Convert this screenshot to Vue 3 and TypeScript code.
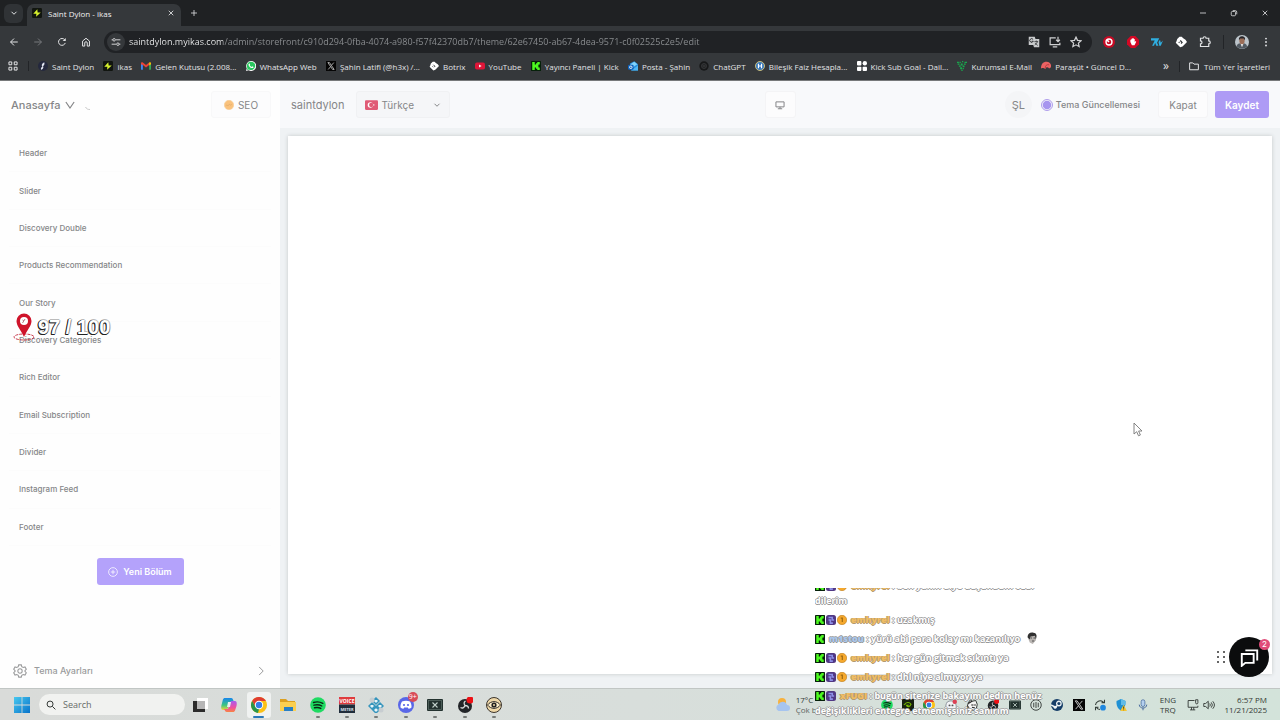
<script setup lang="ts">
import { ref } from 'vue'

interface Bookmark { icon: string; label: string }
interface Message { badges: string[]; user?: string; tone?: string; text: string; emote?: boolean }

const icons: Record<string, string> = {
  chevron: '<path d="M4 6l4 4 4-4" class="ln"/>',
  close: '<path d="M3.5 3.5l9 9M12.500 3.500l-9 9" class="ln"/>',
  plus: '<path d="M8 2v12M2 8h12" class="ln"/>',
  minimize: '<path d="M2 8h12" class="ln"/>',
  restore: '<rect x="2.500" y="5" width="8.500" height="8.500" rx="2" class="ln"/><path d="M5.500 3.200h5a3 3 0 0 1 3 3v4.500" class="ln"/>',
  back: '<path d="M14 8H2.500M8 2.500L2.500 8 8 13.500" class="ln"/>',
  forward: '<path d="M2 8h11.500M8 2.500L13.500 8 8 13.500" class="ln"/>',
  reload: '<path d="M13.200 9.500A5.500 5.500 0 1 1 12.300 4.500" class="ln"/><path d="M14 1.500v5H9z" fill="currentColor"/>',
  home: '<path d="M2.500 6.500L8 2l5.500 4.500v8H10V9.500a2 2 0 0 0-4 0v5H2.500z" class="ln"/>',
  tune: '<path d="M1 4.500h2M8 4.500h7M1 11.500h7M13 11.500h2" class="ln"/><circle cx="5" cy="4.500" r="2" class="ln"/><circle cx="11" cy="11.500" r="2" class="ln"/>',
  translate: '<path d="M1 1h8l1 3h5v11H8l-1-3H1z" fill="#c9cbcd"/><path d="M6.800 4.600A2.400 2.400 0 1 0 7 7H5" fill="none" stroke="#292b2e" stroke-width="1.300"/><path d="M8.500 7.500h5M11 6v1.500M12.500 7.500c-.5 2-2 3.500-3.500 4.500M9.500 9.500c1 1.500 2.500 2.500 3.500 3" fill="none" stroke="#292b2e"/>',
  install: '<path d="M9 2.500H1.500v9h13V9M5 14.500h6" class="ln"/><path d="M12 1v6M9.500 5L12 7.500 14.500 5" class="ln"/>',
  star: '<path d="M8 1.500l2 4.300 4.700.5-3.500 3.200 1 4.700L8 11.800l-4.200 2.400 1-4.700L1.300 6.300 6 5.800z" class="ln"/>',
  redEye: '<circle cx="8" cy="8" r="8" fill="#c80a24"/><circle cx="8" cy="8" r="4" fill="none" stroke="#fff" stroke-width="1.800"/><path d="M8 8L5.500 5.500" stroke="#fff" stroke-width="2"/>',
  block: '<path d="M5 0h6l5 5v6l-5 5H5l-5-5V5z" fill="#d30824"/><path d="M4.500 8V5h1.300v2V3.500h1.500V7 2.800h1.500V7 4h1.500v4l1-1.200 1 .8-2.300 4.600H6.500z" fill="#fff"/>',
  seven: '<path d="M0 3h8L4 13H1.500L5 6H0zM8 3h3l-3 6 2 4H7L5.500 9zM10 8l2-3 1 4 3-3-3 7h-2z" fill="#2faee0"/>',
  diamond: '<path d="M3 4l3-3h3l2 2 3 2 2 3-6 6-3 1-6-6 1-2z" fill="#fff"/><path d="M7 6l2 2M10 8l-2 2M5 8l1 1" stroke="#34373a" stroke-width="1.500"/>',
  puzzle: '<path d="M2 3h3.500a2 2 0 0 1 4 0H13v3.500a2 2 0 0 1 0 4V14H2v-3.500a2 2 0 0 0 0-4z" class="ln"/>',
  avatar: '<circle cx="8" cy="8" r="8" fill="#bcc4ca"/><path d="M2 13c0-3 3-4 6-4s5 1 6 4a8 8 0 0 1-12 0z" fill="#525a62"/><path d="M6 9h4l-2 5z" fill="#eef0f1"/><ellipse cx="8" cy="6.500" rx="3" ry="4" fill="#9b6d57"/><path d="M4.500 6C4 2.500 6 1.200 8.500 1.500S12 3.500 11.300 6L10 4H6z" fill="#272529"/>',
  more: '<circle cx="8" cy="2.500" r="1.500" fill="currentColor"/><circle cx="8" cy="8" r="1.500" fill="currentColor"/><circle cx="8" cy="13.500" r="1.500" fill="currentColor"/>',
  apps: '<path d="M1.500 1.500h4.500v4.500H1.500zM10 1.500h4.500v4.500H10zM1.500 10h4.500v4.500H1.500zM10 10h4.500v4.500H10z" class="ln"/>',
  feather: '<circle cx="8" cy="8" r="8" fill="#24283e"/><path d="M10 2c-4 2-5 5-3 7-2 1-3 3-2 5 4-1 4-4 3-6 2-1 3-3 2-6z" fill="#dfe3ef"/>',
  bolt: '<rect width="16" height="16" rx="2" fill="#111510"/><path d="M8.500 2L2 9h5l-.5 5L14 7H9z" fill="#d9f32e"/>',
  gmail: '<path d="M0 3h3v11H1c-.6 0-1-.4-1-1z" fill="#4285f4"/><path d="M13 3h3v10c0 .6-.4 1-1 1h-2z" fill="#34a853"/><path d="M0 3.500C0 2 2 1.500 3 2.500l5 4 5-4v4l-5 4-5-4L0 5z" fill="#ea4335"/><path d="M13 2.500c1-1 3-.5 3 1V5l-3 2z" fill="#fbbc04"/>',
  whatsapp: '<path d="M0 16l1.200-4.300A8 8 0 1 1 4.300 14.900z" fill="#fff"/><path d="M1.500 14.500l.9-3.100A6.700 6.700 0 1 1 4.700 13.600z" fill="#29c75f"/><path d="M5 4c.8-.5 1.300.8 1.600 1.700L6 6.700c.6 1.300 1.700 2.200 3 2.700l1-1 2 1c0 1.500-1.500 2.200-2.700 1.900C6.500 10.500 4 8 4 5.800 4 5 4.500 4.200 5 4z" fill="#fff"/>',
  xlogo: '<rect width="16" height="16" fill="#050505"/><path d="M3 2.500h2.500l7.500 11h-2.500zM12.500 2.500L9 6.500M3.500 13.500l3.700-4.300" fill="none" stroke="#e8e8e8" stroke-width="1.100"/>',
  youtube: '<rect y="2.500" width="16" height="11" rx="3" fill="#df1538"/><path d="M6.500 5.500v5l4-2.500z" fill="#fff"/>',
  kick: '<rect width="16" height="16" rx="1" fill="#06210a"/><path d="M2 1.500h4v4h2v-2h2v-2h4v4h-2v2h-1v1h1v2h2v4h-4v-2H8v-2H6v4H2z" fill="#4dfa20"/>',
  outlook: '<path d="M3 4l7-3.500L16 5v10H5z" fill="#238bdc"/><path d="M4 5l6-4 5 4-7 5z" fill="#80d3fb"/><path d="M5 15l11-8v8z" fill="#50b7f4"/><rect y="6" width="9" height="8" rx="2" fill="#0d62bd"/><circle cx="4.500" cy="10" r="2" fill="none" stroke="#fff" stroke-width="1.400"/>',
  chatgpt: '<circle cx="8" cy="8" r="7.500" fill="#171819"/><circle cx="8" cy="8" r="4" fill="none" stroke="#454749"/><path d="M8 4v8M4.500 6l7 4M11.500 6l-7 4" stroke="#3b3d3f"/>',
  hbadge: '<circle cx="8" cy="8" r="7.200" fill="#3979bd" stroke="#dfcc7b" stroke-width="1.400"/><path d="M5.500 4.500v7M10.500 4.500v7M5.500 8h5" stroke="#fff" stroke-width="1.800"/>',
  tiles: '<rect width="7" height="7" rx="1.500" fill="#fff"/><circle cx="12.500" cy="3.500" r="3.500" fill="#fff"/><rect y="9" width="7" height="7" rx="1.500" fill="#fff"/><rect x="9" y="9" width="7" height="7" rx="1.500" fill="#fff"/>',
  dots: '<g fill="#18a94d"><path d="M0 1h3v2H0zM4 1h2v2H4zM8 0h2v2H8zM12 1h4v2h-4zM1 4h3v2H1zM6 4h3v3H6zM11 4h3v2h-3zM3 7h3v2H3zM9 7h3v3H9zM5 10h3v3H5zM9 11h2v2H9zM7 14h2v2H7z"/></g>',
  parasut: '<path d="M0 12C0 5 3 1 9 1c5 0 8 4 7 9l-3 2c-2-3-5-3-6 1-2-2-4-2-7-1z" fill="#eb6263"/><path d="M7 12C6 8 9 5 13 6" fill="none" stroke="#b9373d" stroke-width="1.500"/>',
  folder: '<path d="M1 3h5l2 2h7v9H1z" class="ln"/>',
  orange: '<circle cx="8" cy="8" r="7.500" fill="#fac27d" stroke="#f7ce98"/><path d="M3.500 9c2-4 2 3 4-1s1 3 5-1" fill="none" stroke="#e0ad6c" stroke-width="1.300"/>',
  purple: '<circle cx="8" cy="8" r="7.300" fill="none" stroke="#a48fe8" stroke-width="1.200"/><circle cx="8" cy="8" r="5.700" fill="#a795ef"/>',
  monitor: '<path d="M1.500 3h13v8h-13zM8 11v3M4.500 14h7" class="ln"/>',
  gear: '<path d="M6.500 1h3l.5 2 1.700 1 2-.6 1.500 2.600L13.700 7.500v1L15.200 10l-1.500 2.600-2-.6-1.700 1-.5 2h-3L6 13l-1.700-1-2 .6L.8 10l1.500-1.500v-1L.8 6l1.500-2.600 2 .6L6 3z" class="thin"/><circle cx="8" cy="8" r="2.500" class="thin"/>',
  right: '<path d="M5 1.500L11.500 8 5 14.500" class="ln"/>',
  addCircle: '<circle cx="8" cy="8" r="7" class="thin"/><path d="M8 4.500v7M4.500 8h7" class="thin"/>',
  windows: '<defs><linearGradient id="wg" x2="1" y2="1"><stop stop-color="#48c8ef"/><stop offset="1" stop-color="#0873ca"/></linearGradient></defs><path d="M0 0h7.600v7.600H0zM8.400 0H16v7.600H8.400zM0 8.400h7.600V16H0zM8.400 8.400H16V16H8.400z" fill="url(#wg)"/>',
  search: '<circle cx="6.500" cy="6.500" r="4.800" class="ln"/><path d="M10.200 10.200L15 15" class="ln"/>',
  taskview: '<path d="M5 1h11v11H5z" fill="#fff"/><path d="M1 4h12v11H1z" fill="#2b2b2b"/><path d="M5 4h8v8H5z" fill="#b6b6b6"/>',
  copilot: '<defs><linearGradient id="ca" x2="0" y2="1"><stop stop-color="#1685ed"/><stop offset=".6" stop-color="#3cc780"/><stop offset="1" stop-color="#f4d33c"/></linearGradient><linearGradient id="cb" x2="0" y2="1"><stop stop-color="#a85af0"/><stop offset=".6" stop-color="#f0509d"/><stop offset="1" stop-color="#f88542"/></linearGradient></defs><path d="M4 1h6c2 0 2 2 3 4H9L7 11c-.5 1.500-1 2-2 2H2C0 13 0 10 .5 8l1.300-5C2.200 1.600 3 1 4 1z" fill="url(#ca)"/><path d="M12 15H6c-2 0-2-2-3-3h4L9 6c.5-1.500 1-2 2-2h3c2 0 2 3 1.500 5l-1.300 4c-.4 1.400-1.200 2-2.200 2z" fill="url(#cb)"/><path d="M7 5h3L9 10H6z" fill="#e8edf0"/>',
  chrome: '<circle cx="8" cy="8" r="8" fill="#fbc116"/><path d="M1.100 4A8 8 0 0 1 15 4H8L4.500 10z" fill="#df3e32"/><path d="M1.100 4l3.500 6L8 12l-1 4A8 8 0 0 1 1.100 4z" fill="#28954b"/><circle cx="8" cy="8" r="4.200" fill="#fff"/><circle cx="8" cy="8" r="3.200" fill="#367de6"/>',
  explorer: '<path d="M0 2h6l2 2h7v4H0z" fill="#dca020"/><path d="M0 5h16v9H0z" fill="#fbcf50"/><path d="M4 10h9v4H4z" fill="#287fc5"/>',
  spotify: '<circle cx="8" cy="8" r="7.800" fill="#1edb62"/><path d="M3.500 5.500c3-1 6.500-.7 9.300.8M4 8.200c2.700-.8 5.500-.5 7.800.8M4.500 10.800c2.300-.6 4.500-.4 6.300.6" fill="none" stroke="#092713" stroke-width="1.400" stroke-linecap="round"/>',
  voice: '<rect width="16" height="7.500" fill="#df3c3e"/><rect y="7.500" width="16" height="8.500" fill="#202d3b"/><text x="8" y="5.800" font-size="5" font-weight="700" text-anchor="middle" fill="#fff">VOICE</text><text x="8" y="13.500" font-size="4" font-weight="700" text-anchor="middle" fill="#dce2e8">METER</text>',
  lamp: '<g fill="#e8f4f8" stroke="#3695bd" stroke-width="1.500"><path d="M8 1l3 3-3 3-3-3zM4 6l3 3-3 3-3-3zM12 6l3 3-3 3-3-3zM8 10l3 3-3 3-3-3z"/></g><circle cx="4" cy="3" r="2.500" fill="#c7cdd1"/><circle cx="13" cy="13" r="2.500" fill="#c7cdd1"/>',
  discord: '<circle cx="8" cy="8" r="8" fill="#5967e8"/><path d="M4 4.500c2.500-1 5.500-1 8 0 1.200 2 1.700 4 1.500 6-1 .8-2 1.200-3 1.300l-.7-1.200H6.200l-.7 1.200c-1-.1-2-.5-3-1.300-.2-2 .3-4 1.500-6z" fill="#fff"/><circle cx="6" cy="8" r="1.100" fill="#5967e8"/><circle cx="10" cy="8" r="1.100" fill="#5967e8"/>',
  terminal: '<rect y="2" width="16" height="12" rx="1" fill="#23322f"/><rect x="1.500" y="3.500" width="13" height="9" fill="none" stroke="#5f706a" stroke-width=".7"/><path d="M5.500 5.500l5 5M10.500 5.500l-5 5" stroke="#c1d0ca" stroke-width="1.100"/>',
  obs: '<circle cx="8" cy="9" r="7" fill="#222528"/><path d="M8 8.500c-1.500-2-1-3.500.5-4.500M8 8.500c2.500 0 3.500 1.500 3.500 3M8 8.500c-1 2.500-2.500 3-4.500 2" fill="none" stroke="#d7d9da" stroke-width="1.300"/><circle cx="13" cy="3" r="3.500" fill="#ed1116"/>',
  eye: '<circle cx="8" cy="8" r="7.500" fill="#efd8a8" stroke="#3c352d"/><path d="M1.500 8C5 3.500 11 3.500 14.500 8 11 12.500 5 12.500 1.500 8z" fill="#f8eac8" stroke="#302d2b"/><circle cx="8" cy="8" r="2.600" fill="#222"/><circle cx="8" cy="8" r="1" fill="#efd8a8"/>',
  weather: '<circle cx="7" cy="5" r="4" fill="#f7b23e"/><path d="M3.500 14a3.500 3.500 0 0 1 0-6.500A4.500 4.500 0 0 1 12 8a3 3 0 0 1 0 6z" fill="#a6c4ef"/>',
  nvidia: '<rect width="16" height="16" fill="#162010"/><path d="M2.500 8C6 3.500 10 4 12 7c-2 4-5 4-6 1.500 1 .6 2 0 2.500-1" fill="none" stroke="#77b900" stroke-width="1.500"/>',
  trayDiscord: '<path d="M3 4c3-2 7-2 10 0 2 3 2 5 2 8-2 2-4 2-5 1H6c-2 1-4 0-5-1 0-3 0-5 2-8z" fill="#f2f3f6" stroke="#757c85"/><circle cx="6" cy="8.500" r="1.300" fill="#555"/><circle cx="10" cy="8.500" r="1.300" fill="#555"/><circle cx="13" cy="3.500" r="3" fill="#dc4054"/>',
  horse: '<path d="M1 13l2-8 3-4 2 2 5-1 2 5-1 5-4 3-5-1-2-4z" fill="#f5f5f3" stroke="#313632" stroke-width="1.300"/><path d="M3 6l5-3M7 8h3M12 7v2M8 11l4 1" stroke="#222" stroke-width="1.500"/>',
  bars: '<circle cx="8" cy="8" r="7" fill="none" stroke="#3e4441" stroke-width="1.300"/><path d="M5 5v6M8 4v8M11 5v6" stroke="#3e4441" stroke-width="1.300"/>',
  steam: '<circle cx="8" cy="8" r="8" fill="#163e68"/><circle cx="10.500" cy="6" r="3" fill="none" stroke="#eef4f6" stroke-width="1.700"/><path d="M0 8l6 3 3-3" fill="none" stroke="#eef4f6" stroke-width="2"/><circle cx="5.500" cy="11" r="2" fill="#eef4f6"/>',
  sync: '<path d="M2 8a6 6 0 0 1 10-4l2 1M14 1v4h-4M8 14a6 6 0 0 1-5-3M2 15v-4h4" fill="none" stroke="#333c38" stroke-width="1.400"/><circle cx="12" cy="11.500" r="3.800" fill="#1f87df"/>',
  shield: '<path d="M8 0l6 2.500C14.500 9 12 13 8 15.500 4 13 1.500 9 2 2.500z" fill="#2091d4"/><path d="M8 0l6 2.500V8H8z" fill="#60bbe8"/><path d="M11.500 7.500L16 16H7z" fill="#f7c735"/><path d="M11.500 10v3M11.500 14v1" stroke="#39320c" stroke-width="1.100"/>',
  mic: '<rect x="5.500" y="1" width="5" height="9" rx="2.500" fill="#b4d0ef" stroke="#45699c"/><path d="M3 7.500c0 6 10 6 10 0M8 12v3" fill="none" stroke="#45699c" stroke-width="1.300"/>',
  network: '<path d="M10 2H1.500v9h13V9M4 14.500h7M6 11v3.500M9 11v3.500" class="thin"/><path d="M11.500 1v4a1.500 1.500 0 0 0 3 0V1z" class="thin"/>',
  speaker: '<path d="M1 6h2.500L7 3v10l-3.500-3H1zM9 6q1.500 2 0 4M11 4.500q3 3.500 0 7M13 3q4.500 5 0 10" class="thin"/>',
  badge: '<rect width="16" height="16" rx="4" fill="#513884"/><path d="M4 4h6v4h3M4 8h3v5h4" fill="none" stroke="#8d8fe8" stroke-width="2.500"/>',
  coin: '<circle cx="8" cy="8" r="7.500" fill="#f5a82d" stroke="#bd7d1b"/><path d="M6 5h2.500v6" fill="none" stroke="#a06c14" stroke-width="2"/>',
  chat: '<path d="M1.500 5h10v7.500H4.500L1.500 15z" class="ln"/><path d="M4.500 2h10v8.500" class="ln"/>'
}

const bookmarks: Bookmark[] = [
  { icon: 'feather', label: 'Saint Dylon' },
  { icon: 'bolt', label: 'ikas' },
  { icon: 'gmail', label: 'Gelen Kutusu (2.008...' },
  { icon: 'whatsapp', label: 'WhatsApp Web' },
  { icon: 'xlogo', label: 'Şahin Latifi (@h3x) /...' },
  { icon: 'diamond', label: 'Botrix' },
  { icon: 'youtube', label: 'YouTube' },
  { icon: 'kick', label: 'Yayıncı Paneli | Kick' },
  { icon: 'outlook', label: 'Posta - Şahin' },
  { icon: 'chatgpt', label: 'ChatGPT' },
  { icon: 'hbadge', label: 'Bileşik Faiz Hesapla...' },
  { icon: 'tiles', label: 'Kick Sub Goal - Dail...' },
  { icon: 'dots', label: 'Kurumsal E-Mail' },
  { icon: 'parasut', label: 'Paraşüt • Güncel D...' }
]

const sections = ['Header', 'Slider', 'Discovery Double', 'Products Recommendation', 'Our Story', 'Discovery Categories', 'Rich Editor', 'Email Subscription', 'Divider', 'Instagram Feed', 'Footer']
const extensions = ['redEye', 'block', 'seven', 'diamond', 'puzzle']
const taskApps = ['taskview', 'copilot', 'chrome', 'explorer', 'spotify', 'voice', 'lamp', 'discord', 'terminal', 'obs', 'eye']
const running = ['spotify', 'voice', 'lamp', 'discord', 'terminal', 'obs', 'eye']
const tray = ['spotify', 'nvidia', 'chrome', 'trayDiscord', 'horse', 'obs', 'terminal', 'bars', 'steam', 'xlogo', 'sync', 'shield', 'mic']

const messages: Message[] = [
  { badges: ['kick', 'badge', 'coin'], user: 'emhyrel', tone: 'gold', text: 'ben yakın diye düşündüm özür dilerim' },
  { badges: ['kick', 'badge', 'coin'], user: 'emhyrel', tone: 'gold', text: 'uzakmış' },
  { badges: ['kick'], user: 'm1stou', tone: 'blue', text: 'yürü abi para kolay mı kazanılıyo', emote: true },
  { badges: ['kick', 'badge', 'coin'], user: 'emhyrel', tone: 'gold', text: 'her gün gitmek sıkıntı ya' },
  { badges: ['kick', 'badge', 'coin'], user: 'emhyrel', tone: 'gold', text: 'dhl niye almıyor ya' },
  { badges: ['kick', 'badge'], user: 'xFUGI', tone: 'gold', text: 'bugün sitenize bakayım dedim henüz değişiklikleri entegre etmemişsiniz sanırım' }
]

const address = ref('saintdylon.myikas.com/admin/storefront/c910d294-0fba-4074-a980-f57f42370db7/theme/62e67450-ab67-4dea-9571-c0f02525c2e5/edit')
const language = ref('tr')
const query = ref('')
</script>

<template>
  <div class="desktop">
    <header class="browser">
      <div class="tabs">
        <button class="tab-list" aria-label="Sekmeler"><svg class="i10" viewBox="0 0 16 16" v-html="icons.chevron" /></button>
        <div class="tab">
          <svg class="i10" viewBox="0 0 16 16" v-html="icons.bolt" />
          <span class="tab-title">Saint Dylon - ikas</span>
          <button aria-label="Kapat"><svg class="i8" viewBox="0 0 16 16" v-html="icons.close" /></button>
        </div>
        <button class="new-tab" aria-label="Yeni sekme"><svg class="i8" viewBox="0 0 16 16" v-html="icons.plus" /></button>
        <div class="window-buttons">
          <button v-for="n in ['minimize', 'restore', 'close']" :key="n" :aria-label="n"><svg class="i8" viewBox="0 0 16 16" v-html="icons[n]" /></button>
        </div>
      </div>
      <div class="toolbar">
        <div class="nav">
          <button v-for="n in ['back', 'forward', 'reload', 'home']" :key="n" :class="n" :aria-label="n"><svg class="i10" viewBox="0 0 16 16" v-html="icons[n]" /></button>
        </div>
        <div class="omnibox">
          <button class="site-info" aria-label="Site bilgileri"><svg class="i10" viewBox="0 0 16 16" v-html="icons.tune" /></button>
          <input v-model="address" class="address" aria-label="Adres" spellcheck="false" />
          <button v-for="n in ['translate', 'install', 'star']" :key="n" :aria-label="n"><svg class="i12" viewBox="0 0 16 16" v-html="icons[n]" /></button>
        </div>
        <div class="extensions">
          <button v-for="n in extensions" :key="n" :aria-label="n"><svg class="i12" viewBox="0 0 16 16" v-html="icons[n]" /></button>
        </div>
        <div class="profile">
          <button aria-label="Profil"><svg class="i14" viewBox="0 0 16 16" v-html="icons.avatar" /></button>
          <button aria-label="Menü"><svg class="i10" viewBox="0 0 16 16" v-html="icons.more" /></button>
        </div>
      </div>
      <nav class="bookmarks">
        <button class="apps" aria-label="Uygulamalar"><svg class="i10" viewBox="0 0 16 16" v-html="icons.apps" /></button>
        <div class="bookmark-list">
          <a v-for="b in bookmarks" :key="b.label" href="#"><svg class="i10" viewBox="0 0 16 16" v-html="icons[b.icon]" /><span>{{ b.label }}</span></a>
        </div>
        <button class="overflow">»</button>
        <a class="all" href="#"><svg class="i10" viewBox="0 0 16 16" v-html="icons.folder" /><span>Tüm Yer İşaretleri</span></a>
      </nav>
    </header>

    <div class="editor">
      <aside class="sidebar">
        <div class="side-head">
          <button class="page-menu">Anasayfa <svg class="i12" viewBox="0 0 16 16"><path d="M2.500 4L8 12l5.500-8" class="ln" /></svg></button>
          <svg class="spinner" viewBox="0 0 16 16"><path d="M3 8c2 4 5 5 9 5" class="ln" /></svg>
          <button class="outline seo"><svg class="i10" viewBox="0 0 16 16" v-html="icons.orange" />SEO</button>
        </div>
        <ul class="sections">
          <li v-for="s in sections" :key="s"><button>{{ s }}</button></li>
        </ul>
        <div class="add-row"><button class="primary add"><svg class="i10" viewBox="0 0 16 16" v-html="icons.addCircle" />Yeni Bölüm</button></div>
        <button class="theme-settings"><svg class="i14" viewBox="0 0 16 16" v-html="icons.gear" /><span>Tema Ayarları</span><svg class="i10" viewBox="0 0 16 16" v-html="icons.right" /></button>
      </aside>
      <main class="workspace">
        <div class="main-head">
          <div class="head-left">
            <span class="store">saintdylon</span>
            <label class="language">
              <svg class="flag" viewBox="0 0 24 18"><rect width="24" height="18" rx="2" fill="#e05b76" /><circle cx="10" cy="9" r="5" fill="#fff" /><circle cx="11.500" cy="9" r="4" fill="#e05b76" /><path d="M14 9l4-1.500-2.500 3.500v-4L18 10.500z" fill="#fff" /></svg>
              <select v-model="language" aria-label="Dil"><option value="tr">Türkçe</option></select>
              <svg class="i10" viewBox="0 0 16 16" v-html="icons.chevron" />
            </label>
          </div>
          <button class="outline device" aria-label="Masaüstü"><svg class="i10" viewBox="0 0 16 16" v-html="icons.monitor" /></button>
          <div class="head-right">
            <span class="initials">ŞL</span>
            <button class="update"><svg class="i12" viewBox="0 0 16 16" v-html="icons.purple" />Tema Güncellemesi</button>
            <button class="outline dismiss">Kapat</button>
            <button class="primary save">Kaydet</button>
          </div>
        </div>
        <div class="canvas-wrap"><div class="canvas"></div></div>
      </main>
    </div>

    <footer class="taskbar">
      <button class="start" aria-label="Başlat"><svg class="i16" viewBox="0 0 16 16" v-html="icons.windows" /></button>
      <label class="search"><svg class="i10" viewBox="0 0 16 16" v-html="icons.search" /><input v-model="query" placeholder="Search" aria-label="Search" /></label>
      <div class="task-apps">
        <button v-for="n in taskApps" :key="n" :class="{ active: n === 'chrome', running: running.includes(n) }" :aria-label="n">
          <svg class="i16" viewBox="0 0 16 16" v-html="icons[n]" /><span v-if="n === 'discord'" class="count">9+</span>
        </button>
      </div>
      <div class="weather"><svg class="i16" viewBox="0 0 16 16" v-html="icons.weather" /><div>17°C<br /><span>Çok bulutlu</span></div></div>
      <div class="tray"><svg v-for="n in tray" :key="n" class="i12" viewBox="0 0 16 16" v-html="icons[n]" /></div>
      <div class="input-lang">ENG<br />TRQ</div>
      <div class="status"><svg class="i12" viewBox="0 0 16 16" v-html="icons.network" /><svg class="i12" viewBox="0 0 16 16" v-html="icons.speaker" /></div>
      <div class="clock">6:57 PM<br />11/21/2025</div>
    </footer>

    <div class="goal">
      <svg viewBox="0 0 22 28"><ellipse cx="11" cy="24" rx="10" ry="3" fill="none" stroke="#c83b4d" stroke-dasharray="3 1" /><path d="M11 24C8 17 3.500 13 3.500 8a7.500 7.500 0 0 1 15 0c0 5-4.500 9-7.500 16z" fill="#cf142b" /><circle cx="11" cy="8" r="4" fill="#fff" /><path d="M9.500 10l2.500-4M9.500 7l1.500 1" stroke="#bb7783" /></svg>
      <span>97 / 100</span>
    </div>

    <div class="stream-chat">
      <div class="messages">
        <p v-for="(m, k) in messages" :key="k"><svg v-for="b in m.badges" :key="b" class="i10" viewBox="0 0 16 16" v-html="icons[b]" /><b :class="m.tone">{{ m.user }}</b> : {{ m.text }}<svg v-if="m.emote" class="emote" viewBox="0 0 16 16"><path d="M3 3c3-3 10-2 11 2l-1 6-4 5-4-2-2-5z" fill="#b9b5b2" /><path d="M2 7C2 2 6 0 10 1c4 0 5 4 3 9l-1-5-6 1-1 4z" fill="#303030" /><path d="M6 8h2M10 8h2M8 12h3" stroke="#333" /></svg></p>
      </div>
    </div>

    <div class="support">
      <svg class="grip" viewBox="0 0 8 12"><circle v-for="n in 6" :key="n" :cx="n % 2 ? 1 : 7" :cy="1 + Math.floor((n - 1) / 2) * 5" r="1" fill="#333" /></svg>
      <button aria-label="Sohbet"><svg viewBox="0 0 16 16" v-html="icons.chat" /><span>2</span></button>
    </div>
    <svg class="pointer" viewBox="0 0 10 15"><path d="M1 1v11l2.700-2.300 1.800 4.100 1.900-.8-1.800-4H9z" fill="#fff" stroke="#777" stroke-width=".9" /></svg>
  </div>
</template>

<style>
body { margin: 0; }
</style>

<style scoped>
.desktop { position: relative; display: flex; flex-direction: column; min-height: 100vh; overflow: hidden; background: #fff; font-family: "Inter", "Liberation Sans", sans-serif; color: #858688; }
button, input, select { margin: 0; padding: 0; border: 0; background: none; font: inherit; color: inherit; outline: 0; }
button { display: flex; align-items: center; justify-content: center; }
a { color: inherit; text-decoration: none; }
svg { display: block; flex: none; }
.desktop :deep(.ln) { fill: none; stroke: currentColor; stroke-width: 1.6; }
.desktop :deep(.thin) { fill: none; stroke: currentColor; stroke-width: 1.2; }
.i8 { width: 8px; height: 8px; }
.i10 { width: 10px; height: 10px; }
.i12 { width: 12px; height: 12px; }
.i14 { width: 14px; height: 14px; }
.i16 { width: 16px; height: 16px; }

.browser { background: #35383b; color: #e2e3e5; font-family: "Open Sans", "Noto Sans", sans-serif; font-size: 8px; }
.tabs { display: flex; align-items: center; height: 26px; padding-left: 4px; border-bottom: 1px solid #35383b; background: #1f2123; }
.tab-list { width: 19px; height: 19px; border-radius: 6px; background: #303336; }
.tab { display: flex; align-items: center; align-self: stretch; gap: 6px; box-sizing: border-box; width: 154px; margin-top: 4px; margin-left: 4px; padding: 0 6px 4px 5px; border-radius: 7px 7px 0 0; background: #35383b; color: #f0f0f1; }
.tab-title { flex: 1; }
.new-tab { margin-left: 9px; }
.window-buttons { display: flex; gap: 23px; margin-left: auto; padding-right: 11px; }
.toolbar { display: flex; align-items: center; height: 29px; padding: 0 9px; }
.nav { display: flex; gap: 14px; }
.forward { color: #77797c; }
.omnibox { display: flex; flex: 1; align-items: center; gap: 9px; height: 22px; margin-left: 13px; padding: 0 10px 0 3px; border-radius: 11px; background: #202225; color: #d0d1d3; }
.site-info { width: 18px; height: 18px; border-radius: 50%; background: #35383b; }
.address { flex: 1; min-width: 0; margin-left: -5px; font-size: 9px; color: transparent; background: linear-gradient(90deg, #f1f2f3 94px, #8d9093 94px); background-clip: text; }
.extensions { display: flex; gap: 12px; margin-left: 11px; }
.profile { display: flex; align-items: center; gap: 12px; margin-left: 12px; padding-left: 11px; border-left: 1px solid #222427; }
.bookmarks { display: flex; align-items: center; box-sizing: border-box; height: 25px; padding: 0 10px 4px 8px; border-bottom: 1px solid #77797a; white-space: nowrap; }
.apps { padding-right: 10px; border-right: 1px solid #222427; }
.bookmark-list { display: flex; flex: 1; justify-content: space-between; margin: 0 32px 0 9px; }
.bookmarks a { display: flex; align-items: center; gap: 4px; }
.overflow { margin-right: 10px; font-size: 12px; line-height: 12px; }
.bookmarks .all { gap: 5px; padding-left: 9px; border-left: 1px solid #222427; }

.editor { display: flex; flex: 1; }
.sidebar { display: flex; flex-direction: column; width: 280px; background: #fefefe; }
.side-head { display: flex; align-items: center; height: 47px; margin-bottom: 7px; padding: 0 9px 0 11px; }
.page-menu { gap: 4px; font-size: 11px; font-weight: 500; }
.spinner { width: 8px; height: 8px; margin-left: 8px; margin-top: 4px; color: #bbb; }
.outline { box-sizing: border-box; height: 27px; border: 1px solid #f4f4f6; border-radius: 3px; background: #fcfcfd; font-size: 10px; }
.seo { gap: 4px; width: 60px; margin-left: auto; border-color: #f8f8f9; }
.sections { display: grid; flex: 1; grid-auto-rows: 1fr; margin: 0 9px; padding: 0; list-style: none; font-size: 8px; font-weight: 500; }
.sections li { display: flex; border-bottom: 1px solid #fcfcfc; }
.sections button { flex: 1; justify-content: flex-start; padding-left: 10px; }
.add-row { display: flex; justify-content: center; height: 27px; margin: 12px 0 68px; }
.primary { height: 27px; border-radius: 3px; background: #ae9bf5; color: #fff; font-size: 10px; font-weight: 600; }
.add { gap: 5px; width: 87px; background: #b4a2fb; font-size: 9px; }
.theme-settings { height: 35px; padding: 0 14px 0 13px; color: #9a9b9c; font-size: 9px; font-weight: 500; }
.theme-settings span { flex: 1; padding-left: 7px; text-align: left; }
.workspace { display: flex; flex: 1; flex-direction: column; min-width: 0; background: #eff2f4; }
.main-head { display: grid; grid-template-columns: 1fr auto 1fr; align-items: center; height: 47px; padding: 0 11px; background: #f8f9fb; }
.head-left, .head-right { display: flex; align-items: center; }
.head-right { justify-content: flex-end; }
.store { font-size: 11px; font-weight: 400; }
.language { display: flex; align-items: center; box-sizing: border-box; width: 94px; height: 27px; margin-left: 12px; padding: 0 7px 0 8px; border: 1px solid #f0f1f3; border-radius: 3px; background: #f5f6f8; font-size: 10px; }
.flag { width: 13px; height: 10px; }
.language select { flex: 1; min-width: 0; margin-left: 3px; appearance: none; }
.device { width: 31px; }
.initials { display: grid; place-items: center; width: 27px; height: 27px; margin-right: 9px; border-radius: 50%; background: #f4f5f7; font-size: 11px; }
.update { gap: 3px; margin-right: 18px; font-size: 9px; font-weight: 500; }
.dismiss { width: 50px; margin-right: 7px; }
.save { width: 54px; }
.canvas-wrap { display: flex; flex: 1; padding: 8px 8px 14px; }
.canvas { flex: 1; background: #fff; box-shadow: 0 0 4px #c4c8ca; }

.taskbar { display: flex; align-items: center; box-sizing: border-box; height: 32px; border-top: 1px solid #c1c6c4; background: linear-gradient(90deg, #d9dbd9, #d8dedb 50%, #d3e3da); color: #333936; font-family: "Open Sans", "Noto Sans", sans-serif; font-size: 8px; line-height: 10px; }
.start { margin-left: 14px; }
.search { display: flex; align-items: center; gap: 7px; box-sizing: border-box; width: 146px; height: 21px; margin-left: 9px; padding-left: 7px; border-radius: 11px; background: #f1f2f0; font-size: 9px; }
.search input { min-width: 0; width: 100px; }
.search input::placeholder { color: #666b68; opacity: 1; }
.task-apps { display: flex; justify-content: space-between; width: 318px; margin-left: 3px; }
.task-apps button { position: relative; width: 24px; height: 26px; border-radius: 3px; }
.task-apps .active { background: #f0f2f1; }
.active::after, .running::after { content: ""; position: absolute; bottom: 0; width: 4px; height: 2px; border-radius: 1px; background: #777b79; }
.active::after { width: 11px; background: #2878b9; }
.count { position: absolute; top: 0; right: 0; width: 10px; height: 10px; border-radius: 50%; background: #d84b58; color: #fff; font-size: 7px; line-height: 10px; }
.weather { display: flex; align-items: center; gap: 5px; margin-left: auto; }
.weather div { width: 85px; }
.weather span { color: #5d6561; }
.tray { display: flex; justify-content: space-between; width: 268px; }
.input-lang { margin-left: 11px; text-align: center; }
.status { display: flex; gap: 4px; margin-left: 11px; }
.clock { width: 52px; margin-right: 13px; text-align: right; }

.goal { position: absolute; left: 13px; top: 313px; display: flex; align-items: center; gap: 3px; }
.goal svg { width: 22px; height: 28px; }
.goal span { color: #fff; font-family: "Liberation Sans", sans-serif; font-size: 20px; font-weight: 700; line-height: 28px; text-shadow: -1px 0 #222, 0 1px #222, -1px 1px #222, 1px 0 #bbb, 0 -1px #bbb; }
.stream-chat { position: absolute; top: 588px; bottom: 0; left: 815px; width: 240px; overflow: hidden; }
.messages { position: absolute; bottom: 2px; display: flex; flex-direction: column; gap: 4px; width: 240px; color: #fff; font-family: "Open Sans", "Noto Sans", sans-serif; font-size: 9px; font-weight: 700; line-height: 15px; text-shadow: 1px 0 #999, -1px 0 #999, 0 1px #999, 0 -1px #aaa; }
.messages p { margin: 0; }
.messages svg { display: inline-block; margin-right: 1px; vertical-align: -2px; }
.messages b { margin-left: 3px; }
.messages .gold { color: #f0bd62; text-shadow: 1px 0 #b39a72, -1px 0 #b39a72, 0 1px #b39a72; }
.messages .blue { color: #a9c7ed; }
.messages .emote { width: 12px; height: 12px; margin-left: 6px; }
.support { position: absolute; right: 11px; bottom: 43px; display: flex; align-items: center; gap: 4px; }
.grip { width: 8px; height: 12px; }
.support button { position: relative; width: 40px; height: 40px; border-radius: 50%; background: #0b0c0d; color: #fff; }
.support button svg { width: 19px; height: 19px; }
.support button span { position: absolute; top: 2px; right: -1px; width: 11px; height: 11px; border-radius: 50%; background: #e04c79; font-size: 8px; line-height: 11px; }
.pointer { position: absolute; top: 422px; left: 1133px; width: 10px; height: 15px; }
</style>
